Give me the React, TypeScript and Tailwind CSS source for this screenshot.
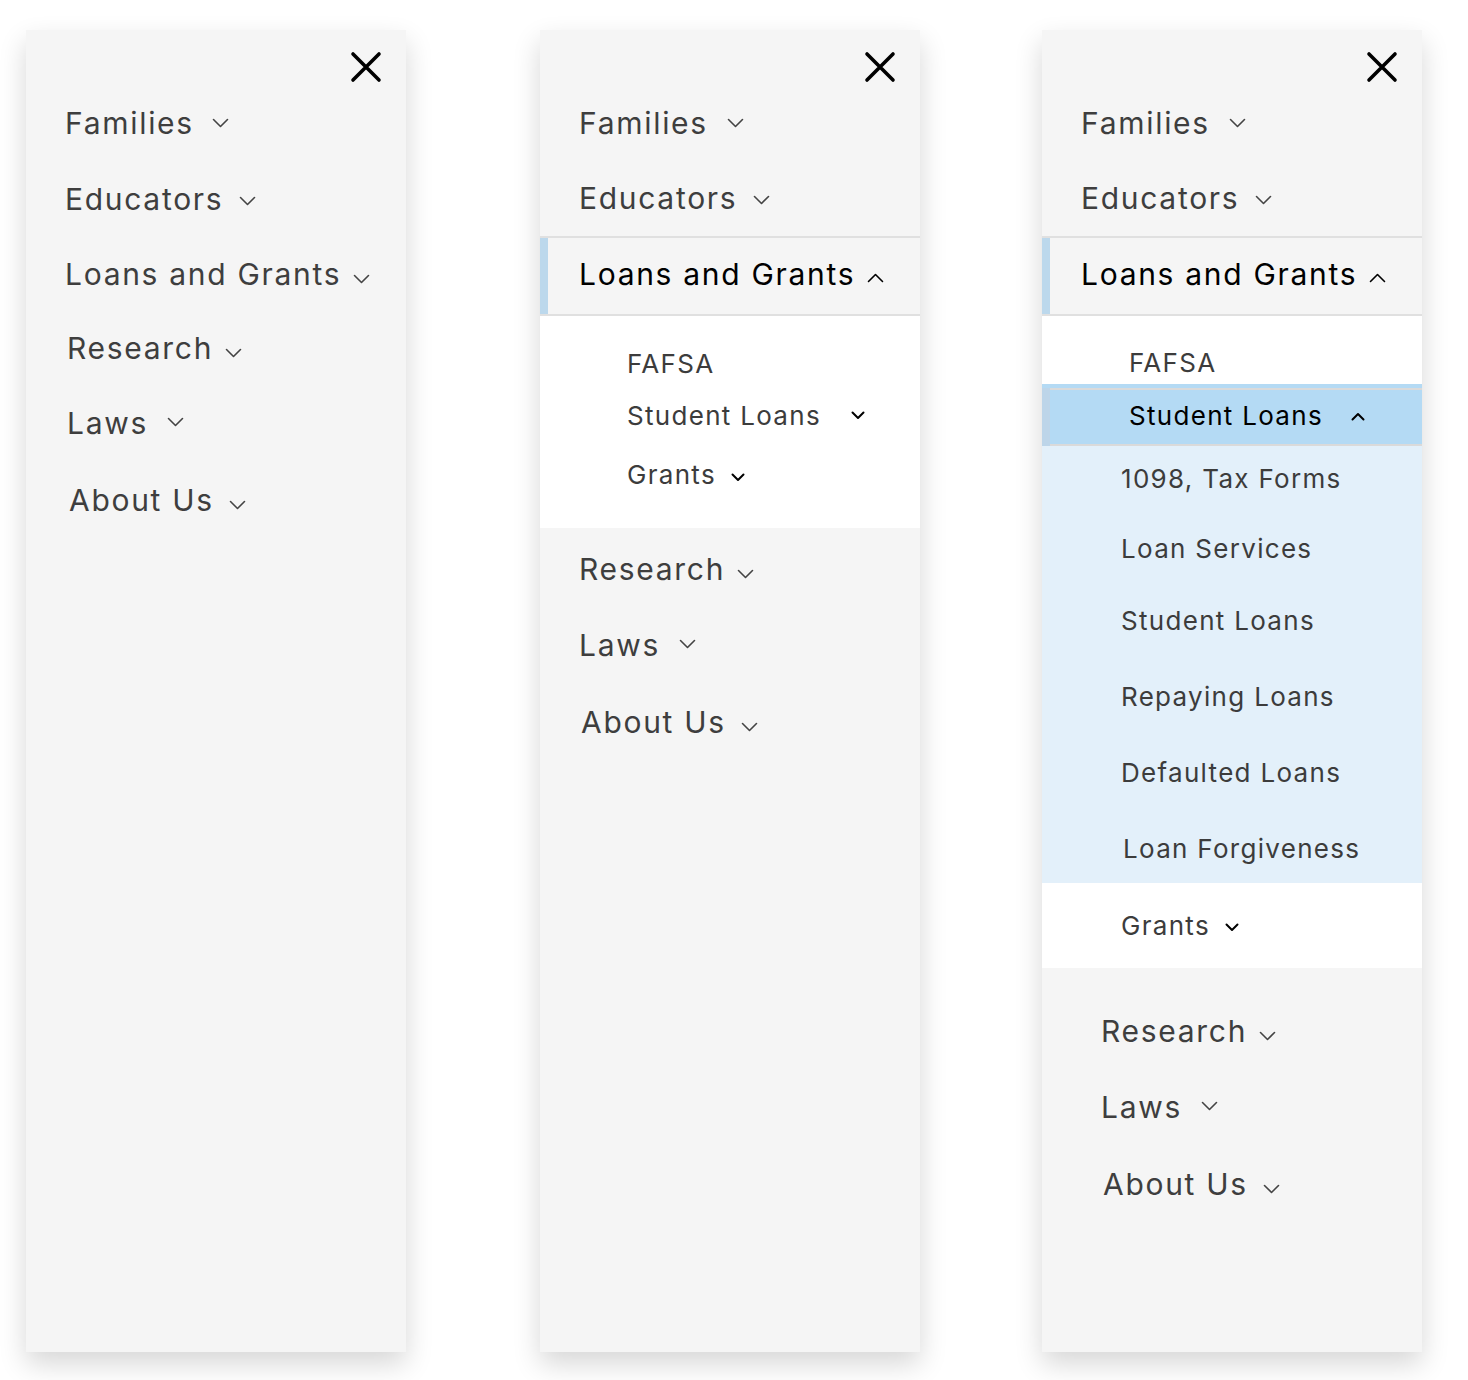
import clsx from 'clsx'

const font = '[font-family:Inter,sans-serif]'

function Chevron({ up, small, className }: { up?: boolean; small?: boolean; className?: string }) {
  if (small) {
    return (
      <svg width="14" height="9" viewBox="0 0 14 9" className={clsx('shrink-0', className)}>
        <polyline
          points={up ? '1.5,7.5 7,2 12.5,7.5' : '1.5,1.5 7,7 12.5,1.5'}
          fill="none"
          stroke="currentColor"
          strokeWidth="2"
          strokeLinecap="round"
          strokeLinejoin="round"
        />
      </svg>
    )
  }
  return (
    <svg width="17" height="10" viewBox="0 0 17 10" className={clsx('shrink-0', className)}>
      <polyline
        points={up ? '1.5,8.5 8.5,1.5 15.5,8.5' : '1.5,1.5 8.5,8.5 15.5,1.5'}
        fill="none"
        stroke="currentColor"
        strokeWidth="1.6"
        strokeLinecap="round"
        strokeLinejoin="round"
      />
    </svg>
  )
}

function CloseIcon() {
  return (
    <svg width="32" height="32" viewBox="0 0 32 32">
      <path d="M3 3 L29 29 M29 3 L3 29" stroke="black" strokeWidth="3.6" strokeLinecap="round" />
    </svg>
  )
}

// one top level row: label + chevron, chevron placed by the label width box
function MainItem({ label, row, w, dy }: { label: string; row: string; w: string; dy?: string }) {
  return (
    <div className={clsx('flex items-center text-[30px] leading-none tracking-[1.7px] text-[#3e3e3e]', row)}>
      <span className={clsx('whitespace-nowrap', w)}>{label}</span>
      <Chevron className={clsx('text-[#444]', dy)} />
    </div>
  )
}

function SubItem({ label, row, w, dy, chevron, up, active }: {
  label: string
  row: string
  w?: string
  dy?: string
  chevron?: boolean
  up?: boolean
  active?: boolean
}) {
  return (
    <div
      className={clsx(
        'flex items-center text-[26px] leading-none tracking-[1.3px]',
        active ? 'text-black' : 'text-[#3c3c3c]',
        row
      )}
    >
      <span className={clsx('whitespace-nowrap', w)}>{label}</span>
      {chevron && <Chevron small up={up} className={clsx('text-black', dy)} />}
    </div>
  )
}

function Header() {
  return (
    <div className="h-[55px] flex justify-end items-end pr-[24px] pb-[2px]">
      <CloseIcon />
    </div>
  )
}

function ActiveLoans() {
  return (
    <div className="flex h-[80px] border-y-2 border-[#e0e0e0]">
      <div className="w-[8px] bg-[#bcd8ec]" />
      <div className="flex items-center pl-[31px] pb-[5px] text-[30px] leading-none tracking-[1.7px] text-black">
        <span className="whitespace-nowrap w-[288px]">Loans and Grants</span>
        <Chevron up className="text-black translate-y-[4px]" />
      </div>
    </div>
  )
}

function Panel({ children }: { children: React.ReactNode }) {
  return (
    <div className="w-[380px] h-[1322px] bg-[#f5f5f5] shadow-[0_12px_26px_rgba(0,0,0,0.16)] flex flex-col shrink-0">
      {children}
    </div>
  )
}

export default function App() {
  return (
    <div className={clsx('min-h-[1380px] bg-white flex pt-[30px] pl-[26px]', font)}>
      {/* collapsed */}
      <Panel>
        <Header />
        <MainItem label="Families" row="h-[76px] pl-[39px]" w="w-[147px]" />
        <MainItem label="Educators" row="h-[76px] pl-[39px]" w="w-[174px]" dy="translate-y-[2px]" />
        <MainItem label="Loans and Grants" row="h-[74px] pl-[39px]" w="w-[288px]" dy="translate-y-[5px]" />
        <MainItem label="Research" row="h-[74px] pl-[41px]" w="w-[158px]" dy="translate-y-[5px]" />
        <MainItem label="Laws" row="h-[76px] pl-[41px]" w="w-[100px]" dy="-translate-y-[1px]" />
        <MainItem label="About Us" row="h-[78px] pl-[43px]" w="w-[160px]" dy="translate-y-[5px]" />
      </Panel>

      {/* loans and grants open */}
      <div className="ml-[134px]">
        <Panel>
          <Header />
          <MainItem label="Families" row="h-[75px] pl-[39px]" w="w-[148px]" />
          <MainItem label="Educators" row="h-[76px] pl-[39px]" w="w-[174px]" dy="translate-y-[2px]" />
          <ActiveLoans />
          <div className="bg-white pt-[22px] pb-[20px]">
            <SubItem label="FAFSA" row="h-[52px] pl-[87px]" />
            <SubItem label="Student Loans" row="h-[52px] pl-[87px]" w="w-[224px]" chevron dy="-translate-y-[1px]" />
            <SubItem label="Grants" row="h-[66px] pl-[87px]" w="w-[104px]" chevron dy="translate-y-[2px]" />
          </div>
          <div className="pt-[3px]">
            <MainItem label="Research" row="h-[76px] pl-[39px]" w="w-[158px]" dy="translate-y-[5px]" />
            <MainItem label="Laws" row="h-[76px] pl-[39px]" w="w-[100px]" dy="-translate-y-[1px]" />
            <MainItem label="About Us" row="h-[78px] pl-[41px]" w="w-[160px]" dy="translate-y-[5px]" />
          </div>
        </Panel>
      </div>

      {/* student loans open */}
      <div className="ml-[122px]">
        <Panel>
          <Header />
          <MainItem label="Families" row="h-[75px] pl-[39px]" w="w-[148px]" />
          <MainItem label="Educators" row="h-[76px] pl-[39px]" w="w-[174px]" dy="translate-y-[2px]" />
          <ActiveLoans />
          <div className="bg-white pt-[26px]">
            <SubItem label="FAFSA" row="h-[42px] pl-[87px]" />
          </div>
          <div className="bg-[#b4daf4] pt-[4px]">
            <div className="flex">
              <div className="w-[8px] bg-[#bdd5e9]" />
              <div className="flex-1 h-[58px] border-y-2 border-[#dadada] pb-[2px] flex items-center">
                <SubItem label="Student Loans" row="pl-[79px]" w="w-[222px]" chevron up active />
              </div>
            </div>
          </div>
          <div className="bg-[#e3f0fa]">
            <SubItem label="1098, Tax Forms" row="h-[66px] pl-[79px]" />
            <SubItem label="Loan Services" row="h-[74px] pl-[79px]" />
            <SubItem label="Student Loans" row="h-[70px] pl-[79px]" />
            <SubItem label="Repaying Loans" row="h-[82px] pl-[79px]" />
            <SubItem label="Defaulted Loans" row="h-[70px] pl-[79px]" />
            <SubItem label="Loan Forgiveness" row="h-[75px] pl-[81px] pt-[6px]" />
          </div>
          <div className="bg-white">
            <SubItem label="Grants" row="h-[85px] pl-[79px]" w="w-[104px]" chevron dy="translate-y-[2px]" />
          </div>
          <div className="pt-[25px]">
            <MainItem label="Research" row="h-[76px] pl-[59px]" w="w-[158px]" dy="translate-y-[5px]" />
            <MainItem label="Laws" row="h-[76px] pl-[59px]" w="w-[100px]" dy="-translate-y-[1px]" />
            <MainItem label="About Us" row="h-[78px] pl-[61px]" w="w-[160px]" dy="translate-y-[5px]" />
          </div>
        </Panel>
      </div>
    </div>
  )
}
